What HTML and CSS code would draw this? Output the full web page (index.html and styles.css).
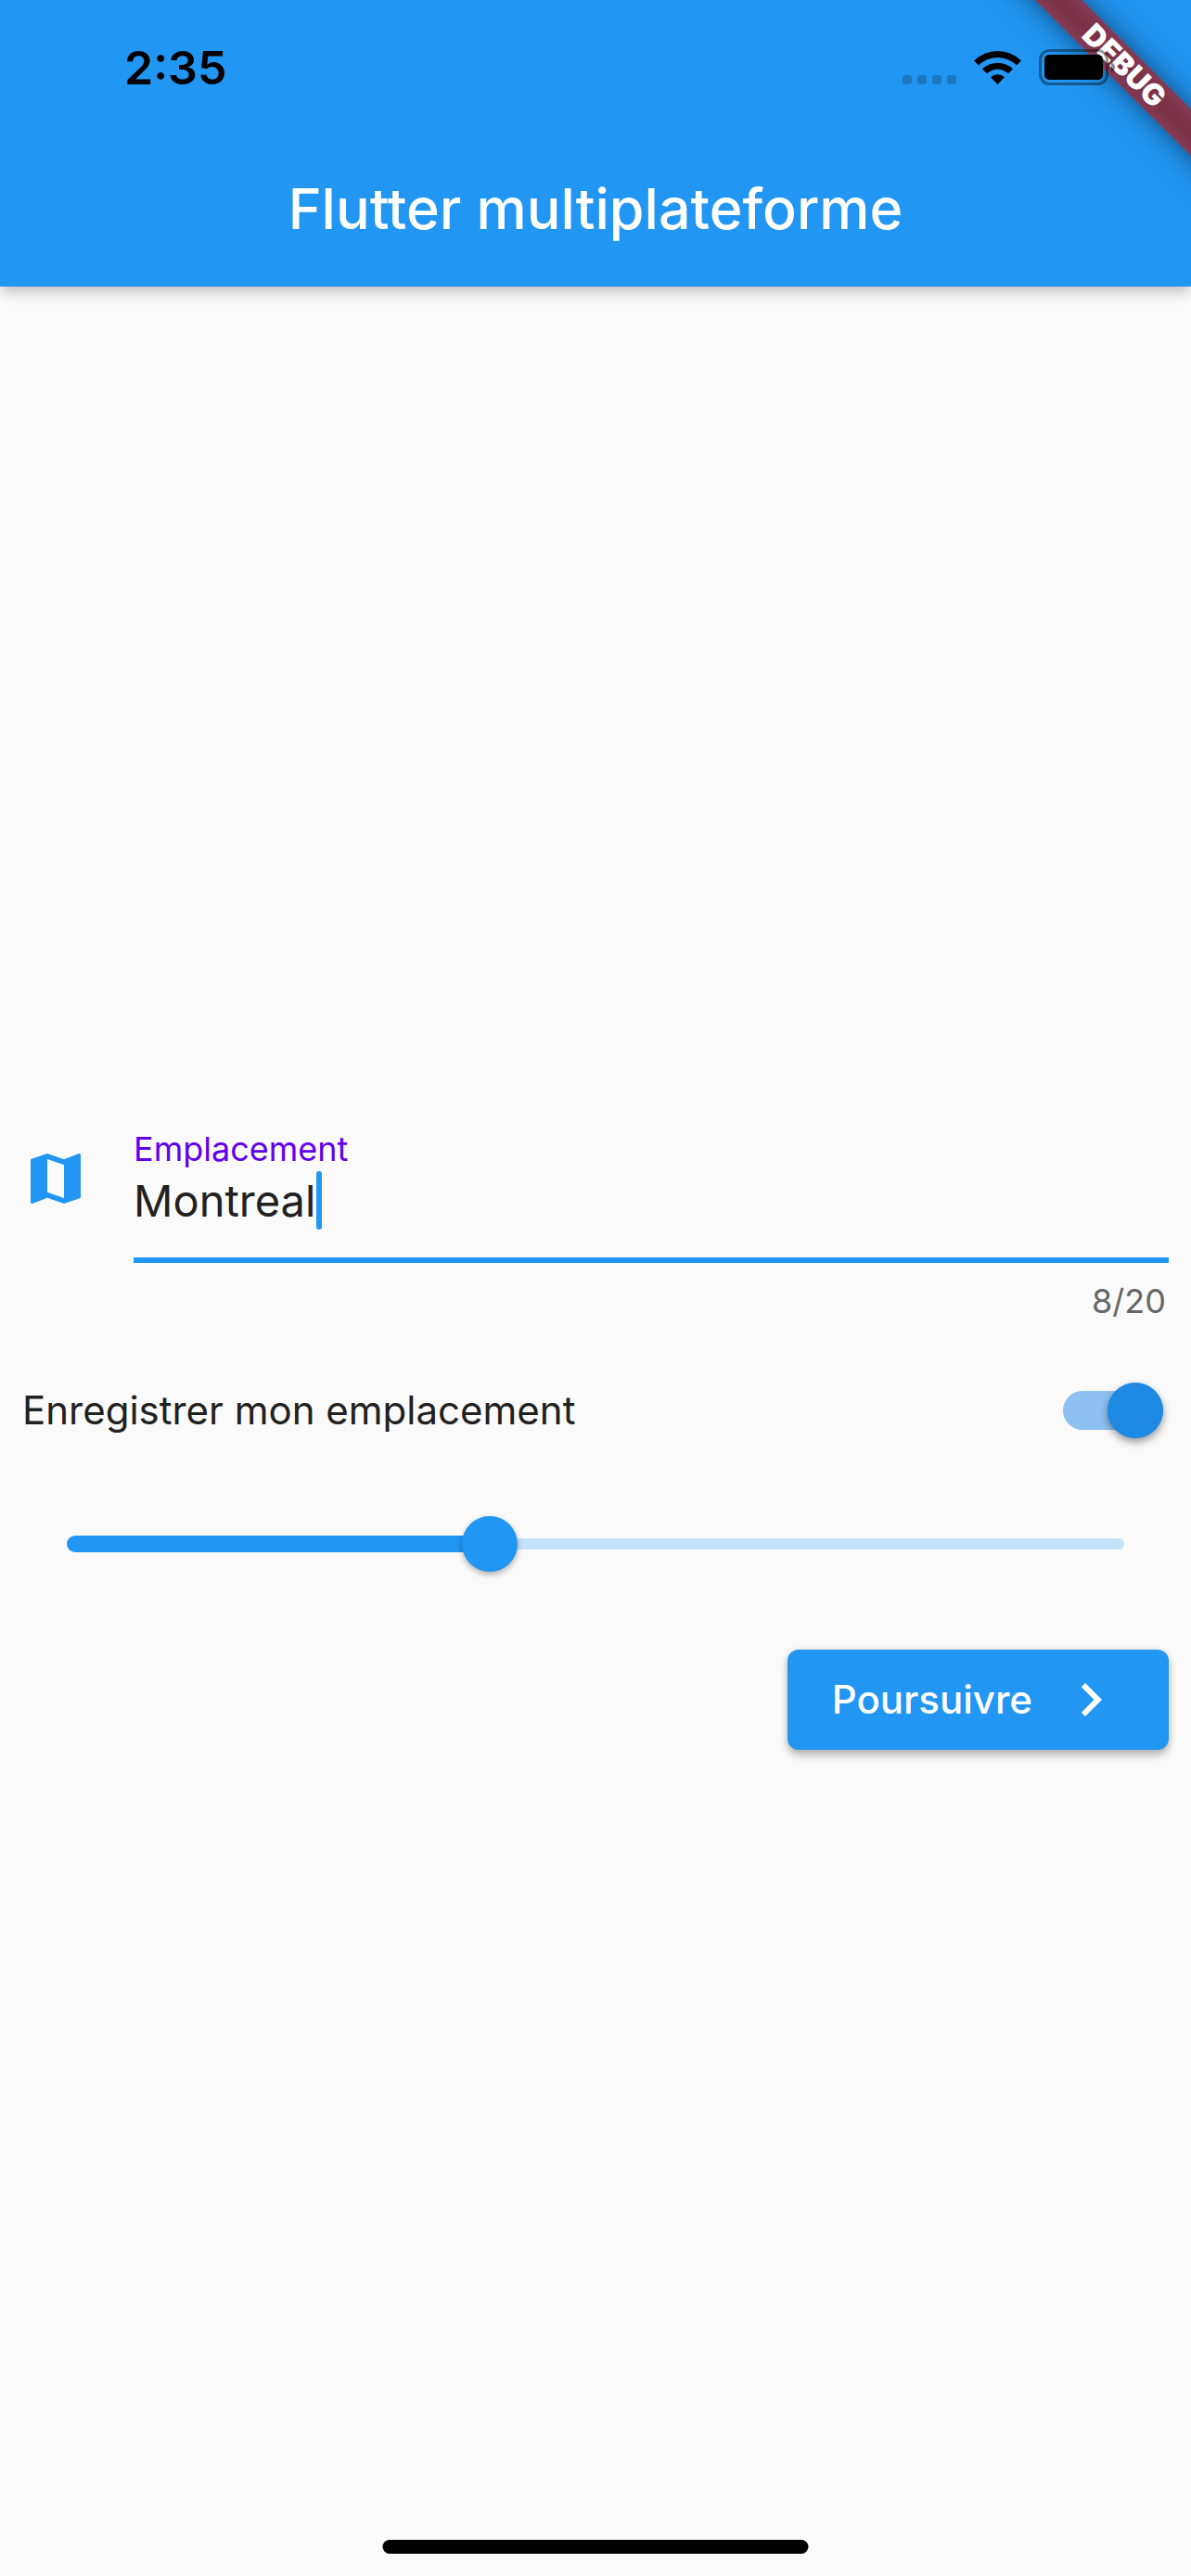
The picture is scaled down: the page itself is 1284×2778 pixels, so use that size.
FILE: index.html
```html
<!DOCTYPE html>
<html lang="fr">
<head>
<meta charset="utf-8">
<meta name="viewport" content="width=device-width, initial-scale=1">
<title>Flutter multiplateforme</title>
<link rel="stylesheet" href="styles.css">
</head>
<body>
<header class="app-bar">
  <div class="status-bar">
    <time class="clock">2:35</time>
    <div class="status-icons">
      <span class="signal"><i></i><i></i><i></i><i></i></span>
      <svg class="wifi" viewBox="0 0 51 37" aria-hidden="true">
        <path d="M0 11.500A36 36 0 0 1 51 11.500L46 16.300A29.500 29.500 0 0 0 5 16.300Z"/>
        <path d="M9 20.500A23.500 23.500 0 0 1 42 20.500L37 25.300A16.500 16.500 0 0 0 14 25.300Z"/>
        <path d="M18 29.300A11 11 0 0 1 33 29.300L25.500 37Z"/>
      </svg>
      <svg class="battery" viewBox="0 0 82 40" aria-hidden="true">
        <rect x="1.500" y="1.500" width="72" height="36" rx="10" fill="none" stroke="#000" stroke-opacity=".4" stroke-width="3"/>
        <rect x="6" y="6" width="63" height="27" rx="5"/>
        <path d="M78 14q4 2 4 5.500t-4 5.500z" fill-opacity=".45"/>
      </svg>
    </div>
  </div>
  <h1 class="title">Flutter multiplateforme</h1>
  <div class="banner-corner"><span class="banner">DEBUG</span></div>
</header>

<main class="content">
  <div class="field">
    <svg class="icon map-icon" viewBox="0 0 24 24" aria-hidden="true"><path d="M20.500 3l-.16.03L15 5.100 9 3 3.360 4.900c-.21.070-.36.250-.36.480V20.500c0 .28.220.500.500.500l.16-.03L9 18.900l6 2.100 5.640-1.900c.21-.07.360-.25.360-.48V3.500c0-.28-.22-.5-.5-.5zM15 19l-6-2.110V5l6 2.110V19z"/></svg>
    <div class="field-body">
      <label class="field-label" for="place">Emplacement</label>
      <div class="input-wrap">
        <input class="field-input" id="place" type="text" value="Montreal" maxlength="20">
        <span class="caret"></span>
      </div>
      <output class="counter" for="place">8/20</output>
    </div>
  </div>

  <div class="switch-row">
    <label for="save">Enregistrer mon emplacement</label>
    <input class="switch" id="save" type="checkbox" role="switch" checked>
  </div>

  <div class="slider">
    <span class="track"></span>
    <span class="track-active" style="width: 40%"></span>
    <input class="range" type="range" min="0" max="100" value="40" aria-label="Valeur">
  </div>

  <div class="actions">
    <button class="button" type="button">
      <span>Poursuivre</span>
      <svg class="icon" viewBox="0 0 24 24" aria-hidden="true"><path d="M10 6L8.590 7.410 13.170 12l-4.580 4.590L10 18l6-6z"/></svg>
    </button>
  </div>
</main>
<div class="home-indicator"></div>
</body>
</html>
```
FILE: styles.css
```css
* {
  box-sizing: border-box;
}

body {
  --blue: #2196f3;
  --ink: #212121;
  margin: 0;
  min-height: 100vh;
  display: flex;
  flex-direction: column;
  position: relative;
  background: #fafafa;
  color: var(--ink);
  font: 400 42px/48px Inter, "Liberation Sans", sans-serif;
}

.app-bar {
  position: relative;
  background: var(--blue);
  box-shadow: 0 6px 12px -3px rgba(0, 0, 0, .16), 0 12px 15px rgba(0, 0, 0, .05), 0 3px 18px rgba(0, 0, 0, .08);
}

.status-bar {
  height: 141px;
  padding: 4px 82px 0 134px;
  display: flex;
  align-items: center;
  justify-content: space-between;
}

.clock {
  color: #000;
  font-size: 50px;
  font-weight: 600;
}

.status-icons {
  position: relative;
  z-index: 2;
  display: flex;
  align-items: center;
  gap: 19px;
}

.signal {
  display: flex;
  gap: 6px;
  align-self: flex-end;
  padding-bottom: 2px;
}

.signal i {
  width: 10px;
  height: 10px;
  border-radius: 3px;
  background: rgba(0, 0, 0, .2);
}

.wifi {
  width: 51px;
  height: 37px;
}

.battery {
  width: 82px;
  height: 40px;
}

.title {
  margin: 0;
  height: 168px;
  line-height: 168px;
  text-align: center;
  color: #fff;
  font-size: 61px;
  font-weight: 500;
}

.banner-corner {
  position: absolute;
  top: 0;
  right: 0;
  width: 309px;
  height: 309px;
  overflow: hidden;
}

.banner {
  position: absolute;
  top: 53px;
  right: -168px;
  width: 480px;
  height: 36px;
  line-height: 36px;
  text-align: center;
  color: #fff;
  background: linear-gradient(#833a56, #7b3247 40%, #7b3247 60%, #833a56);
  box-shadow: 0 0 32px rgba(0, 0, 0, .5);
  font-size: 32px;
  font-weight: 900;
  transform: rotate(45deg);
}

.content {
  flex: 1;
  padding: 0 24px;
  display: flex;
  flex-direction: column;
  justify-content: center;
}

.icon {
  width: 72px;
  height: 72px;
  fill: currentColor;
}

.field {
  display: flex;
  gap: 48px;
  padding: 35px 0 25px;
}

.map-icon {
  margin-top: 17px;
  color: var(--blue);
}

.field-body {
  flex: 1;
  display: flex;
  flex-direction: column;
}

.field-label {
  color: #6200ee;
  font-size: 36px;
  line-height: 42px;
}

.input-wrap {
  position: relative;
}

.field-input {
  display: block;
  width: 100%;
  height: 102px;
  padding: 0 0 26px;
  border: 0;
  border-bottom: 6px solid var(--blue);
  outline: 0;
  background: none;
  color: inherit;
  font: inherit;
  font-size: 47px;
}

.caret {
  position: absolute;
  top: 3px;
  left: 197px;
  width: 6px;
  height: 63px;
  border-radius: 3px;
  background: var(--blue);
}

.counter {
  margin-top: 20px;
  padding-right: 3px;
  text-align: right;
  color: #666;
  font-size: 36px;
  line-height: 42px;
}

.switch-row {
  height: 144px;
  display: flex;
  align-items: center;
  justify-content: space-between;
  padding-right: 6px;
}

.switch {
  appearance: none;
  margin: 0;
  width: 108px;
  height: 42px;
  display: flex;
  align-items: center;
  justify-content: flex-end;
  border-radius: 21px;
  background: #8ec1f1;
}

.switch::before {
  content: "";
  width: 60px;
  height: 60px;
  flex: none;
  border-radius: 50%;
  background: #1e88e5;
  box-shadow: 0 4px 9px rgba(0, 0, 0, .4);
}

.slider {
  height: 144px;
  margin: 0 48px;
  display: grid;
  grid-template-columns: minmax(0, 1fr);
  align-items: center;
}

.slider > * {
  grid-area: 1 / 1;
}

.track {
  height: 12px;
  border-radius: 6px;
  background: #c6e1f8;
}

.track-active {
  height: 18px;
  border-radius: 9px;
  background: var(--blue);
}

.range {
  appearance: none;
  height: 60px;
  margin: 0 -30px;
  background: none;
}

.range::-webkit-slider-thumb {
  appearance: none;
  width: 60px;
  height: 60px;
  border-radius: 50%;
  background: var(--blue);
  box-shadow: 0 3px 6px rgba(0, 0, 0, .3);
}

.actions {
  display: flex;
  justify-content: flex-end;
  padding: 42px 0 18px;
}

.button {
  height: 108px;
  padding: 0 48px;
  display: flex;
  align-items: center;
  gap: 27px;
  border: 0;
  border-radius: 12px;
  background: var(--blue);
  box-shadow: 0 6px 9px rgba(0, 0, 0, .25), 0 0 6px rgba(0, 0, 0, .1);
  color: #fff;
  font: inherit;
  font-weight: 500;
}

.home-indicator {
  position: absolute;
  bottom: 24px;
  left: 50%;
  width: 459px;
  height: 15px;
  border-radius: 8px;
  background: #000;
  transform: translateX(-50%);
}
```
